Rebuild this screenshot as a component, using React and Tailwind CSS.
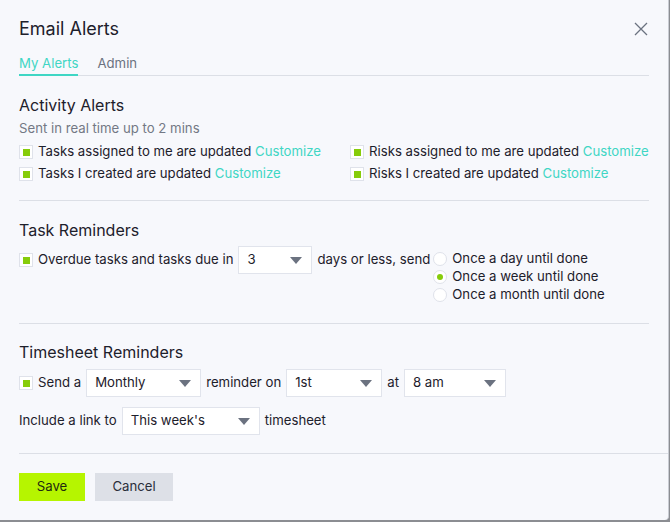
import React, { useState } from "react";

const teal = "text-[#3fd6c4]";

function Check({ checked = true }) {
  return (
    <span className="flex h-[14px] w-[14px] shrink-0 items-center justify-center border border-[#dfe2ea] bg-white">
      {checked && <span className="h-[7px] w-[7px] bg-[#86cc0a]"></span>}
    </span>
  );
}

function Radio({ checked, label }) {
  return (
    <label className="flex h-[18px] items-center gap-[5px]">
      <span className="flex h-[14px] w-[14px] items-center justify-center rounded-full border border-[#dfe2ea] bg-white">
        {checked && <span className="h-[6px] w-[6px] rounded-full bg-[#86cc0a]"></span>}
      </span>
      <span>{label}</span>
    </label>
  );
}

function Select({ value, width }) {
  return (
    <div
      className={`flex h-[28px] items-center justify-between border border-[#e1e4ec] bg-white pl-[8px] pr-[9px] ${width}`}
    >
      <span>{value}</span>
      <svg width="12" height="7" viewBox="0 0 12 7">
        <path d="M0 0h12L6 7z" fill="#6b7280" />
      </svg>
    </div>
  );
}

function AlertRow({ label }) {
  return (
    <div className="flex h-[22px] items-center gap-[5px]">
      <Check />
      <span>
        {label} <span className={teal}>Customize</span>
      </span>
    </div>
  );
}

export default function App() {
  const [tab] = useState("mine");

  return (
    <div
      className="h-[522px] w-[670px] overflow-hidden bg-[#8b8d92] text-[13.2px] text-[#1d202b]"
      style={{ fontFamily: "Inter, 'Noto Sans', sans-serif" }}
    >
      <div className="flex h-[520px] w-[669px] flex-col rounded-br-[4px] border-r border-[#c9ccd3] bg-[#f7f8fc]">
        {/* Header */}
        <div className="flex h-[56px] items-center justify-between pl-[19px] pr-[20px] pt-[1px]">
          <h1 className="text-[18px] font-normal">Email Alerts</h1>
          <svg width="14" height="14" viewBox="0 0 14 14" stroke="#6b7280" strokeWidth="1.3">
            <path d="M1 1l12 12M13 1L1 13" />
          </svg>
        </div>

        {/* Tabs */}
        <div className="ml-[19px] mr-[19px] flex h-[20px] items-end gap-[19px] border-b border-[#dcdfe6]">
          <button
            className={`-mb-px border-b-2 pb-[4px] leading-[14px] ${
              tab === "mine" ? "border-[#3fd6c4] " + teal : "border-transparent text-[#6b7280]"
            }`}
          >
            My Alerts
          </button>
          <button className="-mb-px border-b-2 border-transparent pb-[4px] leading-[14px] text-[#6b7280]">
            Admin
          </button>
        </div>

        {/* Activity alerts */}
        <section className="ml-[19px] mr-[19px] border-b border-[#dcdfe6] pb-[15px] pt-[18px]">
          <h2 className="text-[16px] leading-[22px]">Activity Alerts</h2>
          <p className="mt-[2px] leading-[20px] text-[#737885]">Sent in real time up to 2 mins</p>
          <div className="mt-[3px] flex">
            <div className="w-[331px]">
              <AlertRow label="Tasks assigned to me are updated" />
              <AlertRow label="Tasks I created are updated" />
            </div>
            <div>
              <AlertRow label="Risks assigned to me are updated" />
              <AlertRow label="Risks I created are updated" />
            </div>
          </div>
        </section>

        {/* Task reminders */}
        <section className="ml-[19px] mr-[19px] border-b border-[#dcdfe6] pb-[19px] pt-[18px]">
          <h2 className="text-[16px] leading-[22px]">Task Reminders</h2>
          <div className="mt-[5px] flex items-start">
            <div className="flex h-[28px] items-center gap-[5px]">
              <Check />
              <span>Overdue tasks and tasks due in</span>
              <Select value="3" width="w-[74px]" />
              <span>days or less, send</span>
            </div>
            <div className="ml-[3px] mt-[4px] flex flex-col">
              <Radio label="Once a day until done" />
              <Radio checked label="Once a week until done" />
              <Radio label="Once a month until done" />
            </div>
          </div>
        </section>

        {/* Timesheet reminders */}
        <section className="ml-[19px] mr-[19px] pb-[18px] pt-[17px]">
          <h2 className="text-[16px] leading-[22px]">Timesheet Reminders</h2>
          <div className="mt-[6px] flex h-[28px] items-center gap-[5px]">
            <Check />
            <span>Send a</span>
            <Select value="Monthly" width="w-[115px]" />
            <span>reminder on</span>
            <Select value="1st" width="w-[96px]" />
            <span>at</span>
            <Select value="8 am" width="w-[102px]" />
          </div>
          <div className="mt-[10px] flex h-[28px] items-center gap-[5px]">
            <span>Include a link to</span>
            <Select value="This week's" width="w-[138px]" />
            <span>timesheet</span>
          </div>
        </section>

        {/* Footer */}
        <div className="ml-[19px] flex gap-[10px] border-t border-[#dcdfe6] pt-[19px]">
          <button className="h-[28px] w-[66px] bg-[#b6f500] text-[#1f2a10]">Save</button>
          <button className="h-[28px] w-[78px] bg-[#dde0e7] text-[#2a2e3a]">Cancel</button>
        </div>
      </div>
    </div>
  );
}
